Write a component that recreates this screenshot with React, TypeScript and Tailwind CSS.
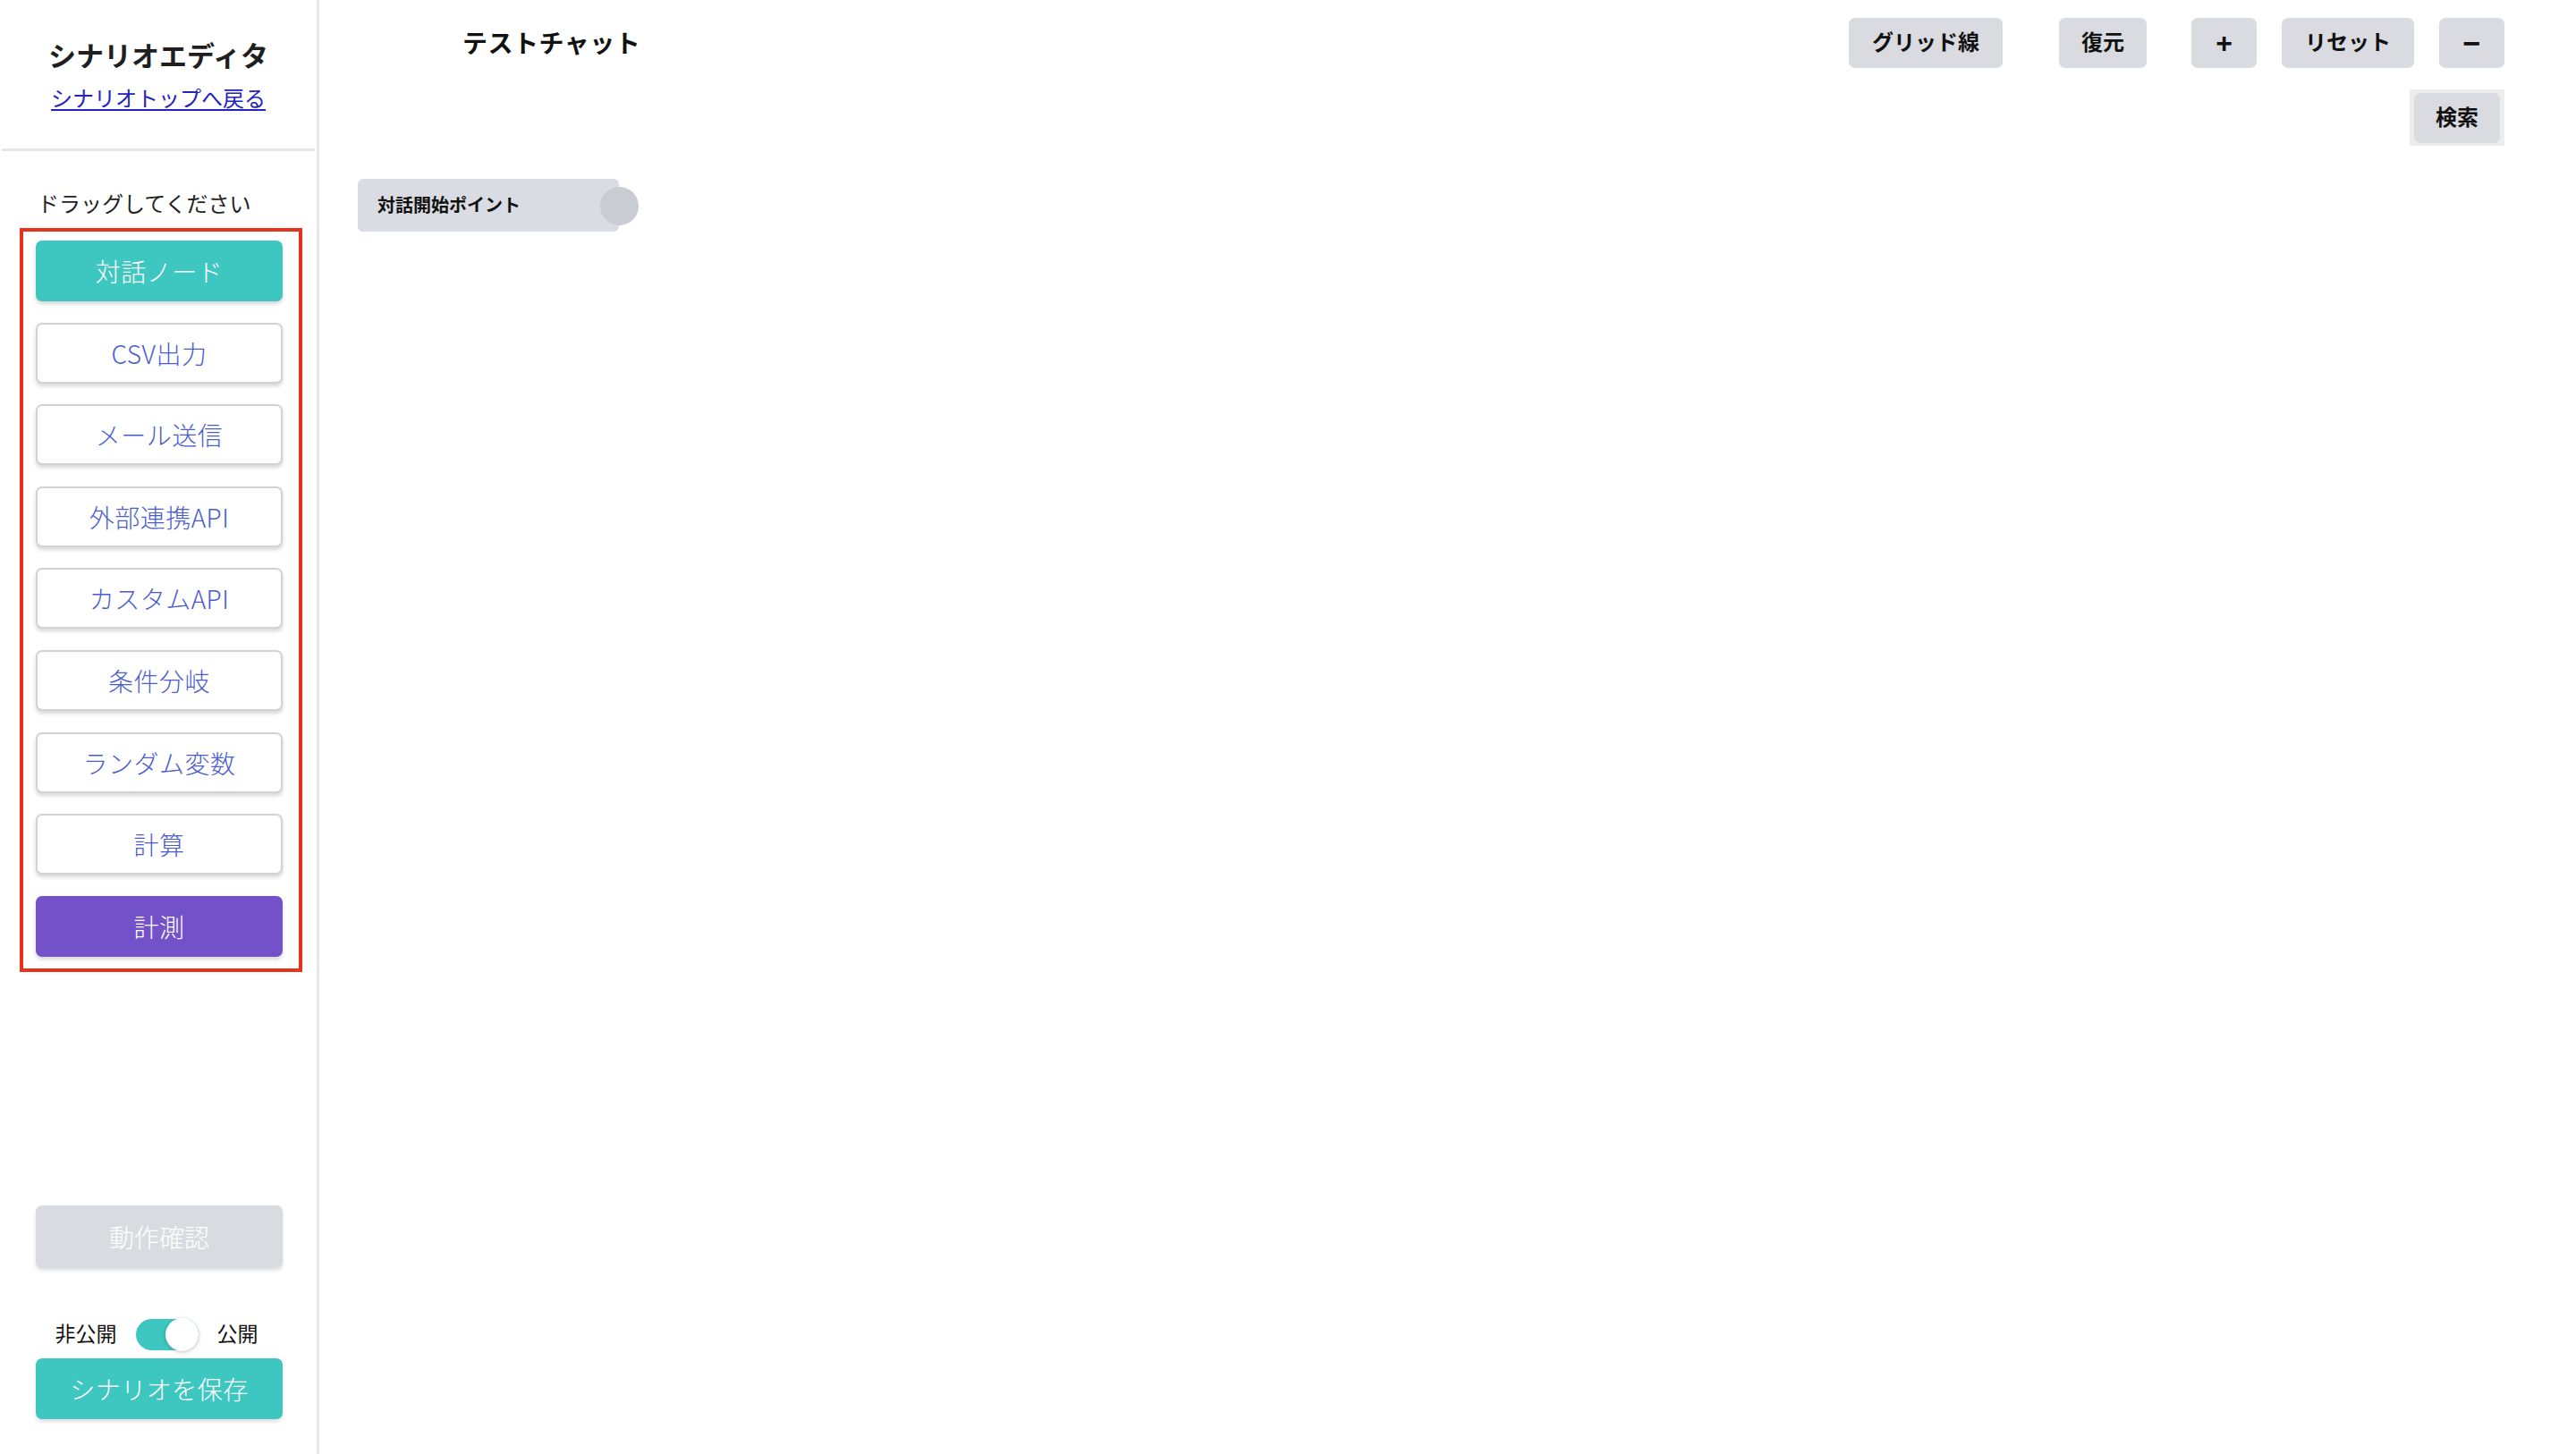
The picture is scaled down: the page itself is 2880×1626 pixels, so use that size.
const FONT = "font-['Liberation_Sans','Noto_Sans_CJK_JP',sans-serif]";
const LIGHT = "font-['Noto_Sans_CJK_JP','Noto_Sans',sans-serif] font-light";

const palette = [
  { label: "対話ノード", kind: "teal" },
  { label: "CSV出力", kind: "plain" },
  { label: "メール送信", kind: "plain" },
  { label: "外部連携API", kind: "plain" },
  { label: "カスタムAPI", kind: "plain" },
  { label: "条件分岐", kind: "plain" },
  { label: "ランダム変数", kind: "plain" },
  { label: "計算", kind: "plain" },
  { label: "計測", kind: "purple" },
];

function PaletteButton({ label, kind }: { label: string; kind: string }) {
  const base = `${LIGHT} w-[276px] h-[68px] shrink-0 rounded-[7px] flex items-center justify-center text-[28px] tracking-[0.5px] shadow-[0_3px_4px_rgba(0,0,0,0.16)]`;
  if (kind === "teal") {
    return <div className={`${base} bg-[#3ec7c0] text-white`}>{label}</div>;
  }
  if (kind === "purple") {
    return <div className={`${base} bg-[#7352c9] text-white`}>{label}</div>;
  }
  return (
    <div className={`${base} bg-white border-2 border-[#d2d2d4] text-[#4a5ccf]`}>{label}</div>
  );
}

function ToolButton({ children, w, size = "text-[24px]" }: { children: React.ReactNode; w: string; size?: string }) {
  return (
    <button className={`${w} ${size} h-[56px] rounded-[7px] bg-[#d9dbe0] font-bold text-[#111] flex items-center justify-center`}>
      {children}
    </button>
  );
}

export default function App() {
  return (
    <div className={`${FONT} flex w-full h-[1626px] bg-white text-[#1f1f1f] overflow-hidden`}>
      {/* sidebar */}
      <aside className="w-[357px] shrink-0 border-r-[3px] border-[#e5e6eb] flex flex-col">
        <div className="pt-[45px] flex flex-col items-center">
          <h1 className="text-[31px] leading-[38px] font-bold">シナリオエディタ</h1>
          <a href="#" className="mt-[13px] text-[24px] leading-[30px] text-[#2323c0] underline underline-offset-[3px]">
            シナリオトップへ戻る
          </a>
        </div>
        <div className="mx-[2px] mt-[40px] h-[3px] bg-[#e4e5ea]" />

        <p className="mt-[45px] ml-[42px] text-[24px] leading-[30px] text-[#222]">ドラッグしてください</p>

        <div className="ml-[22px] mt-[11px] w-[316px] border-[4px] border-[#e8331c] pl-[14px] pt-[10px] pb-[13px] flex flex-col gap-[23.6px]">
          {palette.map((p) => (
            <PaletteButton key={p.label} label={p.label} kind={p.kind} />
          ))}
        </div>

        <div className="flex-1" />

        <div className={`${LIGHT} ml-[40px] w-[276px] h-[70px] rounded-[7px] bg-[#d9dbe0] text-white text-[28px] flex items-center justify-center shadow-[0_3px_4px_rgba(0,0,0,0.12)]`}>
          動作確認
        </div>

        <div className="mt-[57px] flex items-center justify-center gap-[21px] text-[23px] text-[#111] pr-[4px]">
          <span>非公開</span>
          <div className="relative w-[70px] h-[35px] rounded-full bg-[#3ec7c0]">
            <div className="absolute right-0 top-[-1px] w-[37px] h-[37px] rounded-full bg-white shadow-[0_1px_4px_rgba(0,0,0,0.25)]" />
          </div>
          <span>公開</span>
        </div>

        <div className={`${LIGHT} ml-[40px] mt-[9px] mb-[39px] w-[276px] h-[68px] rounded-[7px] bg-[#3ec7c0] text-white text-[28px] tracking-[0.5px] flex items-center justify-center shadow-[0_3px_4px_rgba(0,0,0,0.12)]`}>
          シナリオを保存
        </div>
      </aside>

      {/* canvas */}
      <main className="relative flex-1">
        <div className="flex items-start justify-between pt-[20px] pr-[80px] pl-[160px]">
          <h2 className="mt-[12px] text-[28px] leading-[36px] font-bold text-[#111] tracking-[0.5px]">テストチャット</h2>
          <div className="flex items-center">
            <ToolButton w="w-[172px]">グリッド線</ToolButton>
            <div className="w-[63px]" />
            <ToolButton w="w-[98px]">復元</ToolButton>
            <div className="w-[50px]" />
            <ToolButton w="w-[73px]" size="text-[32px]">+</ToolButton>
            <div className="w-[28px]" />
            <ToolButton w="w-[148px]">リセット</ToolButton>
            <div className="w-[28px]" />
            <ToolButton w="w-[73px]" size="text-[34px]">−</ToolButton>
          </div>
        </div>
        <div className="flex justify-end pr-[80px] mt-[24px]">
          <div className="bg-[#ececec] px-[5px] pt-[4px] pb-[3px]">
            <ToolButton w="w-[96px]">検索</ToolButton>
          </div>
        </div>

        {/* start node */}
        <div className="absolute left-[43px] top-[200px] w-[292px] h-[59px] rounded-[6px] bg-[#d9dce2] flex items-center pl-[22px]">
          <span className="text-[20px] font-bold text-[#111]">対話開始ポイント</span>
          <div className="absolute right-[-22px] top-[9px] w-[43px] h-[43px] rounded-full bg-[#c9ccd2]" />
        </div>
      </main>
    </div>
  );
}
